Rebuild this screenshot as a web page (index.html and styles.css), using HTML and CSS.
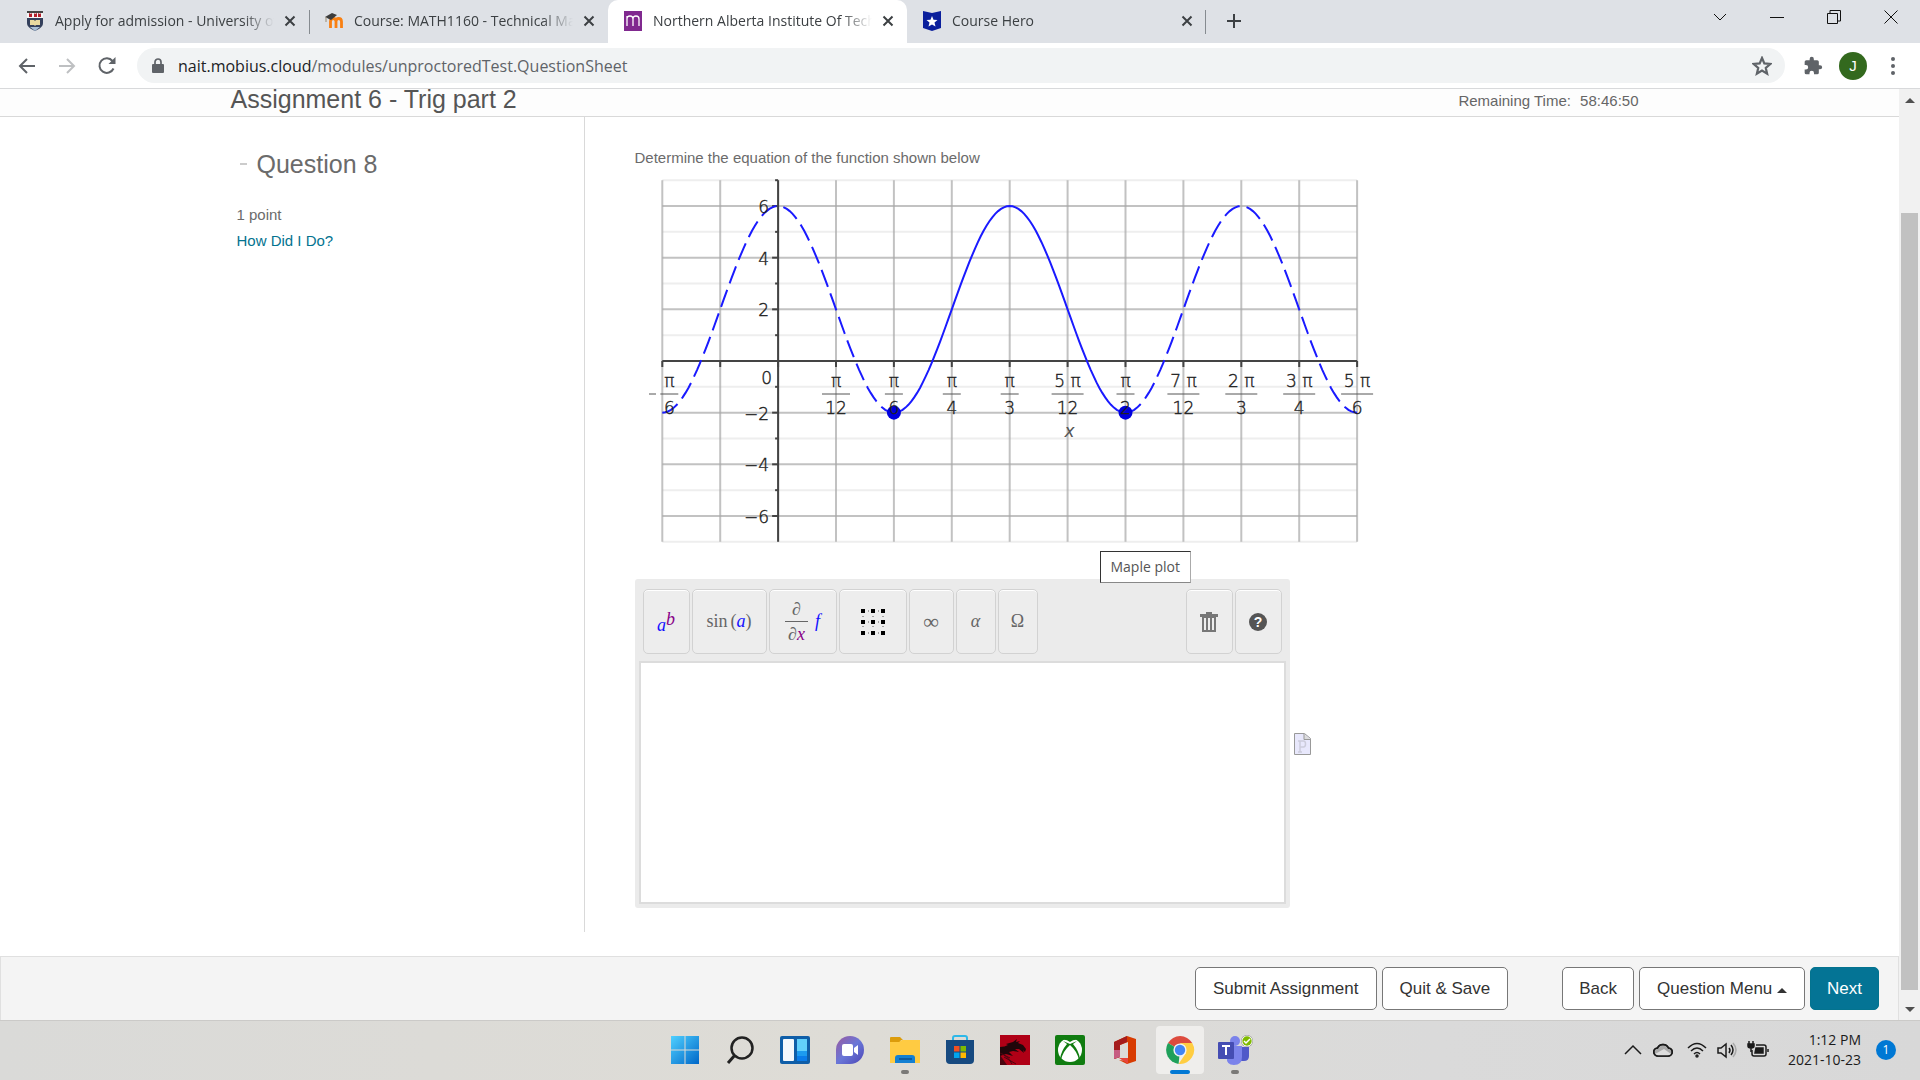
FILE: index.html
```html
<!DOCTYPE html>
<html lang="en">
<head>
<meta charset="UTF-8" />
<meta name="viewport" content="width=device-width, initial-scale=1.0"/>
<title>Northern Alberta Institute Of Technology</title>
<link rel="stylesheet" href="styles.css">
</head>
<body>

<!-- Browser tabs -->
<div class="tab-strip">
  <div class="tab">
    <svg class="favicon" viewBox="0 0 18 20">
      <path d="M1 0h16v12c0 4-4 6-8 8-4-2-8-4-8-8z" fill="#34405c"/>
      <path d="M1 0h16v7H1z" fill="#f5f5f5"/>
      <path d="M1 0h16v2H1z" fill="#444"/>
      <path d="M3 2l2 1 1-1v4H3zM8 2l1 1 2-1v4H8zM12 2l2 1 1-1v4h-3z" fill="#b3202c"/>
      <path d="M4 9h4l1 1 1-1h4v5h-4l-1 1-1-1H4z" fill="#e8d9a0"/>
      <path d="M4 16h10l-5 4z" fill="#a9bfd6"/>
    </svg>
    <span class="tab-title">Apply for admission - University of Victoria</span>
    <button class="tab-close" aria-label="Close tab"><svg viewBox="0 0 12 12"><path d="M1.500 1.500l9 9M10.500 1.500l-9 9"/></svg></button>
  </div>
  <div class="tab divided">
    <svg class="favicon" viewBox="0 0 18 20">
      <path d="M5.500 17V10.500q0-3 2.700-3t2.800 3V17M11 17v-6.500q0-3 2.700-3t2.800 3V17" fill="none" stroke="#f98012" stroke-width="2.800"/>
      <path d="M0 6l7-4 5 2-6 5z" fill="#3c3c3c"/>
      <path d="M1 6v5" stroke="#9a8a70"/>
    </svg>
    <span class="tab-title">Course: MATH1160 - Technical Mathematics</span>
    <button class="tab-close" aria-label="Close tab"><svg viewBox="0 0 12 12"><path d="M1.500 1.500l9 9M10.500 1.500l-9 9"/></svg></button>
  </div>
  <div class="tab active">
    <svg class="favicon" viewBox="0 0 18 20">
      <path d="M0 0h18v20H0z" fill="#80298f"/>
      <path d="M3 15V5M3 8q0-3 3-3t3 3v7M9 8q0-3 3-3t3 3v7" fill="none" stroke="#fff" stroke-width="1.300"/>
    </svg>
    <span class="tab-title">Northern Alberta Institute Of Technology</span>
    <button class="tab-close" aria-label="Close tab"><svg viewBox="0 0 12 12"><path d="M1.500 1.500l9 9M10.500 1.500l-9 9"/></svg></button>
  </div>
  <div class="tab last">
    <svg class="favicon" viewBox="0 0 18 20">
      <path d="M0 0l9 2 9-2v17l-9 3-9-3z" fill="#0a1f9c"/>
      <path d="M9 5l1.500 3.700 4 .3-3 2.600 1 4L9 13.400l-3.500 2.200 1-4-3-2.600 4-.3z" fill="#fff"/>
    </svg>
    <span class="tab-title">Course Hero</span>
    <button class="tab-close" aria-label="Close tab"><svg viewBox="0 0 12 12"><path d="M1.500 1.500l9 9M10.500 1.500l-9 9"/></svg></button>
  </div>
  <button class="new-tab" aria-label="New tab"><svg viewBox="0 0 16 16"><path d="M8 1v14M1 8h14"/></svg></button>
  <div class="window-controls">
    <button aria-label="Search tabs"><svg viewBox="0 0 14 14"><path d="M1 4l6 6 6-6"/></svg></button>
    <button aria-label="Minimize"><svg viewBox="0 0 14 14"><path d="M0 7.500h14"/></svg></button>
    <button aria-label="Restore"><svg viewBox="0 0 14 14"><path d="M.5 3.500h10v10H.5zM3 3V.5h10.500V11H11"/></svg></button>
    <button aria-label="Close"><svg viewBox="0 0 14 14"><path d="M.5.5l13 13M13.500.5l-13 13"/></svg></button>
  </div>
</div>

<!-- Address bar -->
<div class="toolbar">
  <button class="nav" aria-label="Back"><svg viewBox="0 0 20 20"><path d="M18 10H3M10 3l-7 7 7 7"/></svg></button>
  <button class="nav disabled" aria-label="Forward"><svg viewBox="0 0 20 20"><path d="M2 10h15M10 3l7 7-7 7"/></svg></button>
  <button class="nav" aria-label="Reload"><svg viewBox="0 0 20 20"><path d="M16.500 12.500A7.300 7.300 0 1 1 15.500 5"/><path d="M18.500 1v7h-7z" class="solid"/></svg></button>
  <div class="address">
    <svg class="lock" viewBox="0 0 12 16"><path d="M1 6h10q1 0 1 1v7q0 1-1 1H1q-1 0-1-1V7q0-1 1-1z" fill="#5f6368"/><path d="M3 7V4a3 3 0 0 1 6 0v3" fill="none" stroke="#5f6368" stroke-width="1.700"/></svg>
    <div class="url" role="textbox" aria-label="Address" contenteditable="true" spellcheck="false"><span class="host">nait.mobius.cloud</span>/modules/unproctoredTest.QuestionSheet</div>
    <svg class="star" viewBox="0 0 18 18"><path d="M9 1.800l2.100 4.900 5.300.5-4 3.500 1.200 5.200L9 13.100l-4.600 2.800 1.200-5.200-4-3.500 5.300-.5z"/></svg>
  </div>
  <svg class="puzzle" viewBox="0 0 24 24"><path d="M20.500 11H19V7a2 2 0 0 0-2-2h-4V3.500a2.500 2.500 0 0 0-5 0V5H4a2 2 0 0 0-2 2v3.800h1.500a2.700 2.700 0 0 1 0 5.400H2V20a2 2 0 0 0 2 2h3.800v-1.500a2.700 2.700 0 0 1 5.400 0V22H17a2 2 0 0 0 2-2v-4h1.500a2.500 2.500 0 0 0 0-5z" fill="#5f6368"/></svg>
  <button class="profile">J</button>
  <button class="kebab" aria-label="Menu"><svg viewBox="0 0 4 18"><circle cx="2" cy="2" r="2"/><circle cx="2" cy="9" r="2"/><circle cx="2" cy="16" r="2"/></svg></button>
</div>

<div class="viewport">
  <div class="page">
    <header class="page-header">
      <div class="container">
        <h1>Assignment 6 - Trig part 2</h1>
        <div class="timer">Remaining Time: <span>58:46:50</span></div>
      </div>
    </header>

    <main class="container question">
      <aside class="question-info">
        <h2><span class="dash"></span>Question 8</h2>
        <p>1 point</p>
        <a href="#">How Did I Do?</a>
      </aside>

      <section class="question-body">
        <p>Determine the equation of the function shown below</p>
        <div class="plot-wrap">
          <svg class="plot" id="plot" viewBox="0 0 740 404"></svg>
          <div class="tooltip">Maple plot</div>
        </div>

        <div class="answer-row">
          <div class="editor">
            <div class="editor-tools">
              <button class="w-s power"><i class="blue">a</i><i class="purple">b</i></button>
              <button class="w-xl">sin<span class="paren">(</span><i class="blue">a</i>)</button>
              <button class="w-l deriv">
                <span class="frac"><span>∂</span><span>∂<i class="purple">x</i></span></span>
                <i class="blue">f</i>
              </button>
              <button class="w-l" aria-label="Matrix">
                <svg class="matrix" viewBox="0 0 24 26">
                  <path d="M2 2h20M2 13h20M2 24h20M2 2v22M12 2v22M22 2v22" stroke="#555" stroke-dasharray="1 4" stroke-dashoffset="-5"/>
                  <path d="M0 0h4v4H0zM10 0h4v4h-4zM20 0h4v4h-4zM0 11h4v4H0zM10 11h4v4h-4zM20 11h4v4h-4zM0 22h4v4H0zM10 22h4v4h-4zM20 22h4v4h-4z"/>
                </svg>
              </button>
              <button class="w-m symbol">∞</button>
              <button class="w-xs"><i>α</i></button>
              <button class="w-xs">Ω</button>
              <button class="w-s push" aria-label="Clear">
                <svg class="trash" viewBox="0 0 18 20"><path d="M0 2h18v3H0zM6 0h6v2H6zM2 5h14v15H2z" fill="#777"/><path d="M5 6v12M9 6v12M13 6v12" stroke="#eee" stroke-width="2"/></svg>
              </button>
              <button class="w-s" aria-label="Help"><span class="help">?</span></button>
            </div>
            <textarea aria-label="Answer"></textarea>
          </div>
          <a href="#" class="preview" aria-label="Preview">
            <svg viewBox="0 0 17 22">
              <path d="M.5.500h10l6 5v16H.5z" fill="#e8e8fc" stroke="#999"/>
              <path d="M10 1v5.500h6.500" fill="#ddd" stroke="#999"/>
              <path d="M4 19h4M6 19V8M4 8h5.500q2 0 2 3t-2 3H6" fill="none" stroke="#ccccdb" stroke-width="1.500"/>
            </svg>
          </a>
        </div>
      </section>
    </main>

    <footer class="actions">
      <button>Submit Assignment</button>
      <button>Quit &amp; Save</button>
      <button class="back">Back</button>
      <button>Question Menu <span class="caret"></span></button>
      <button class="next">Next</button>
    </footer>
  </div>

  <div class="scrollbar">
    <span class="arrow up"></span>
    <div class="track"><div class="thumb"></div></div>
    <span class="arrow down"></span>
  </div>
</div>

<!-- Windows taskbar -->
<div class="taskbar">
  <div class="apps">
    <button aria-label="Start">
      <svg viewBox="0 0 30 30">
        <defs><linearGradient id="win" x2="1" y2="1"><stop stop-color="#4fd0ff"/><stop offset="1" stop-color="#0067c8"/></linearGradient></defs>
        <path d="M1 1h13.500v13.500H1zM15.500 1H29v13.500H15.500zM1 15.500h13.500V29H1zM15.500 15.500H29V29H15.500z" fill="url(#win)"/>
      </svg>
    </button>
    <button aria-label="Search">
      <svg viewBox="0 0 30 30"><circle cx="17" cy="13" r="10.500" fill="none" stroke="#222" stroke-width="2.500"/><path d="M10 20l-7 8" stroke="#222" stroke-width="3"/></svg>
    </button>
    <button aria-label="Widgets">
      <svg viewBox="0 0 30 30">
        <rect y="1" width="30" height="28" rx="2" fill="#0f5ea8"/>
        <rect x="3" y="4" width="11" height="22" rx="1" fill="#f4f8fc"/>
        <path d="M17 4h10v12H17z" fill="#62d0fb"/><path d="M17 16h10v5H17z" fill="#1c9bf0"/><path d="M17 21h10v5H17z" fill="#0a7cea"/>
      </svg>
    </button>
    <button aria-label="Chat">
      <svg viewBox="0 0 30 30">
        <defs><linearGradient id="chat" x2="1" y2="1"><stop stop-color="#9b5a9e"/><stop offset=".5" stop-color="#6a77d8"/><stop offset="1" stop-color="#4c45b5"/></linearGradient></defs>
        <path d="M1 29V15A14 14 0 1 1 15 29z" fill="url(#chat)"/>
        <rect x="7" y="9" width="11" height="12" rx="2" fill="#fff"/><path d="M19 13l4-3v10l-4-3z" fill="#fff"/>
      </svg>
    </button>
    <button aria-label="File Explorer" class="running">
      <svg viewBox="0 0 30 30">
        <path d="M0 3q0-1 1-1h9l3 3h-2L9 9H0z" fill="#dc9c0b"/>
        <path d="M0 7h9l3-2h18v23H0z" fill="#ffcb42"/>
        <path d="M5 28v-5q0-3 3-3h14q3 0 3 3v5z" fill="#1480d2"/><path d="M9 24h13" stroke="#0b4f91" stroke-width="1.500"/>
      </svg>
    </button>
    <button aria-label="Store">
      <svg viewBox="0 0 30 30">
        <path d="M8 6V3q0-2 2-2h10q2 0 2 2v3" fill="none" stroke="#2eb8e8" stroke-width="2"/>
        <path d="M1 5h28v20q0 4-4 4H5q-4 0-4-4z" fill="#174a80"/>
        <path d="M9 11h5.500v5.500H9z" fill="#f25022"/><path d="M15.500 11H21v5.500h-5.500z" fill="#7fba00"/><path d="M9 17.500h5.500V23H9z" fill="#00a4ef"/><path d="M15.500 17.500H21V23h-5.500z" fill="#ffb900"/>
      </svg>
    </button>
    <button aria-label="Game">
      <svg viewBox="0 0 30 30">
        <path d="M0 0h30v30H0z" fill="#b00016"/>
        <path d="M0 12q5 0 8-2l-2-1 7-2 4-3-1 3 4-1-2 2 5 2 3 4-1 3-2-2 1 3-5-4-4 0 4 3-6-1-4 1 4 4-7-2-6 2z" fill="#20060a"/>
        <path d="M0 20l7 10H0z" fill="#4a0610"/><path d="M0 18q7 2 12 11M4 22l12 7M2 19l8 4" fill="none" stroke="#4a0610"/>
      </svg>
    </button>
    <button aria-label="Xbox">
      <svg viewBox="0 0 30 30">
        <rect width="30" height="30" rx="2" fill="#107c10"/>
        <circle cx="15" cy="15" r="12" fill="#fff"/>
        <path d="M7 5q4-1 8 2 4-3 8-2-4-3-8-3T7 5zM6 25q2-9 9-15 7 6 9 15l1-1q-1-8-7-15l4-3-7 3-7-3 4 3q-6 7-7 15z" fill="#107c10"/>
      </svg>
    </button>
    <button aria-label="Office">
      <svg viewBox="0 0 30 30">
        <path d="M4 7l13-6 9 3v22l-9 3-8-4 9 1V7l-8 3v12l-6 2z" fill="#d83b01"/>
        <path d="M4 7l13-6v6l-7 3v12l-6 2z" fill="#a51c1c"/><path d="M9 23h9v6z" fill="#e6443c"/><path d="M4 15h6v7l-6 2z" fill="#c65c82"/>
      </svg>
    </button>
    <button aria-label="Chrome" class="running current">
      <svg viewBox="0 0 30 30">
        <path d="M15 15L3 8a14 14 0 0 1 24.200 0z" fill="#dd4b3e"/>
        <path d="M15 15L3 8a14 14 0 0 0 10.600 20.900z" fill="#1fa05a"/>
        <path d="M15 8h12.200A14 14 0 0 1 13.600 28.900L21 18z" fill="#ffcd41"/>
        <circle cx="15" cy="15" r="6.600" fill="#f2f2f2"/><circle cx="15" cy="15" r="5.200" fill="#4285f4"/>
      </svg>
    </button>
    <button aria-label="Teams" class="running">
      <svg viewBox="0 0 36 30">
        <circle cx="18" cy="6" r="5" fill="#7b83eb"/><path d="M22 12h10v9q0 5-5 5h-5z" fill="#5059c9"/>
        <path d="M10 11h15v11q0 8-8 8t-7-8z" fill="#7b83eb"/><rect x="1" y="7" width="16" height="17" rx="1" fill="#454db3"/>
        <path d="M5 11h8M9 11v9" stroke="#fff" stroke-width="2"/>
        <circle cx="30" cy="6" r="6" fill="#8a8a8a"/><circle cx="30" cy="6" r="5.500" fill="#fff"/><circle cx="30" cy="6" r="4.700" fill="#7fba00"/>
        <path d="M27 6l2 2 4-4" fill="none" stroke="#fff" stroke-width="1.500"/>
      </svg>
    </button>
  </div>
  <div class="tray">
    <svg viewBox="0 0 20 20"><path d="M2 14l8-8 8 8"/></svg>
    <svg viewBox="0 0 20 20"><path d="M5 16a4 4 0 0 1-.5-8 6 6 0 0 1 11 0A4 4 0 0 1 15 16z" fill="#aaa"/><path d="M2 14l9-5 7 5-3 2H5z" fill="#ddd" stroke="none"/><path d="M5 16a4 4 0 0 1-.5-8 6 6 0 0 1 11 0A4 4 0 0 1 15 16z"/></svg>
    <svg class="wifi" viewBox="0 0 20 20"><path d="M1 8q9-9 18 0M4 11q6-6 12 0M7 14q3-3 6 0"/><circle cx="10" cy="16" r="1"/></svg>
    <svg viewBox="0 0 20 20"><path d="M1 8v5h3l5 4V4L4 8z"/><path d="M12 8q2 2 0 5M14 5q4 5 0 10"/><path d="M16 3q6 7 0 14" stroke="#aaa"/></svg>
    <svg viewBox="0 0 22 20"><path d="M9 5h8q2 0 2 2v7q0 2-2 2H7q-2 0-2-2v-4"/><path d="M9 8h7v5H8z" class="fill"/><path d="M21 9v3"/><path d="M1 4h6v2q0 2-3 2T1 6zM2 1v3M6 1v3M4 8v4" class="fill"/></svg>
    <div class="clock">1:12 PM<br>2021-10-23</div>
    <span class="notifications">1</span>
  </div>
</div>

<script>
const plot = document.getElementById('plot');
const stepX = 57.9;   // one step is pi/12
const stepY = 25.83;
const x = k => 27.3 + stepX * k;
const y = v => 189 - stepY * v;
let out = '';

function line(x1, y1, x2, y2, cls) {
  out += `<line x1="${x1}" y1="${y1}" x2="${x2}" y2="${y2}" class="${cls}"/>`;
}

function text(tx, ty, value, cls) {
  out += `<text x="${tx}" y="${ty}" class="${cls}">${value}</text>`;
}

// y = 2 + 4cos(6x), x axis starts at -pi/6
function curve(from, to, cls) {
  const points = [];
  for (let k = from; k <= to + 0.001; k += 0.05) {
    points.push(x(k).toFixed(1) + ',' + y(2 + 4 * Math.cos((k - 2) * Math.PI / 2)).toFixed(1));
  }
  out += `<polyline points="${points.join(' ')}" class="${cls}"/>`;
}

// Grid
for (let v = -7; v <= 7; v++) {
  line(x(0), y(v), x(12), y(v), v % 2 ? 'minor' : 'major');
}
for (let k = 0; k <= 12; k++) {
  line(x(k), y(7), x(k), y(-7), 'major');
}

// Axes and ticks
line(x(0), y(0), x(12), y(0), 'axis');
line(x(2), y(7), x(2), y(-7), 'axis');
for (let k = 0; k <= 12; k++) {
  line(x(k), y(0), x(k), y(0) + 6, 'axis');
}
for (let v = -6; v <= 7; v++) {
  line(x(2) - (v % 2 ? 3 : 6), y(v), x(2), y(v), 'axis');
}

curve(0, 4, 'curve dashed');
curve(4, 8, 'curve');
curve(8, 12, 'curve dashed');
out += `<circle cx="${x(4)}" cy="${y(-2)}" r="7"/><circle cx="${x(8)}" cy="${y(-2)}" r="7"/>`;

// Labels
['6', '4', '2', '', '−2', '−4', '−6'].forEach((label, i) => {
  if (label) text(x(2) - 9, y(6 - 2 * i) + 7, label, 'end');
});
text(x(2) - 6, 212, 0, 'end');

const labels = [
  [3, 'π', 12], [4, 'π', 6], [5, 'π', 4], [6, 'π', 3], [7, '5 π', 12],
  [8, 'π', 2], [9, '7 π', 12], [10, '2 π', 3], [11, '3 π', 4], [12, '5 π', 6]
];
function fraction(cx, top, bottom) {
  const half = top.length > 1 ? 16 : bottom > 9 ? 14 : 9;
  text(cx, 215, top, 'mid');
  line(cx - half, 222, cx + half, 222, 'bar');
  text(cx, 242, bottom, 'mid');
}
labels.forEach(([k, top, bottom]) => fraction(x(k), top, bottom));
fraction(x(0) + 7, 'π', 6);
line(14, 222, 21, 222, 'bar');
text(x(7) + 2, 265, 'x', 'mid var');

plot.innerHTML = out;
</script>
</body>
</html>
```

FILE: styles.css
```css
* {
  box-sizing: border-box;
}

body {
  margin: 0;
  height: 100vh;
  display: flex;
  flex-direction: column;
  overflow: hidden;
  font-family: "Liberation Sans", Arial, sans-serif;
  font-size: 15px;
  color: #6b6b6b;
  background: #fff;
}

button {
  font: inherit;
  border: 0;
  padding: 0;
  background: none;
  cursor: pointer;
}

h1, h2, p {
  margin: 0;
  font-weight: normal;
}

/* Tabs */
.tab-strip {
  display: flex;
  flex: none;
  height: 43px;
  padding-left: 10px;
  background: #dee1e6;
  font-family: "Open Sans", sans-serif;
  font-size: 14px;
  color: #3c4043;
}

.tab {
  display: flex;
  align-items: center;
  width: 299px;
  padding: 0 11px 2px 16px;
}

.tab.divided,
.tab.last {
  position: relative;
}

.tab.divided::before,
.tab.last::after {
  content: "";
  position: absolute;
  top: 10px;
  left: 0;
  width: 1px;
  height: 24px;
  background: #868b90;
}

.tab.last::after {
  left: auto;
  right: 0;
}

.tab.active {
  background: #fff;
  border-radius: 10px 10px 0 0;
}

.favicon {
  width: 18px;
  height: 20px;
}

.tab-title {
  flex: 1;
  margin: 0 10px 0 11px;
  overflow: hidden;
  white-space: nowrap;
  mask-image: linear-gradient(to right, #000 86%, transparent);
}

.tab-close {
  width: 14px;
  height: 14px;
}

.tab-close svg {
  display: block;
  width: 12px;
  height: 12px;
  margin-top: 1px;
  stroke: #3c4043;
  stroke-width: 2;
}

.new-tab svg {
  display: block;
  width: 16px;
  height: 16px;
  margin: 0 0 2px 20px;
  stroke: #3c4043;
  stroke-width: 2;
}

.window-controls {
  display: flex;
  margin-left: auto;
  padding-right: 1px;
}

.window-controls button {
  width: 57px;
  height: 37px;
}

.window-controls svg {
  width: 14px;
  height: 14px;
  fill: none;
  stroke: #111;
}

/* Address bar */
.toolbar {
  display: flex;
  flex: none;
  align-items: center;
  height: 46px;
  padding: 0 19px 0 17px;
  border-bottom: 1px solid #d8d9db;
}

.nav {
  width: 20px;
  height: 20px;
  margin-right: 20px;
}

.nav svg {
  display: block;
  width: 20px;
  height: 20px;
  fill: none;
  stroke: #5f6368;
  stroke-width: 2;
}

.nav .solid {
  fill: #5f6368;
  stroke: none;
}

.nav.disabled {
  opacity: 0.4;
}

.address {
  flex: 1;
  display: flex;
  align-items: center;
  height: 35px;
  padding: 0 13px 0 15px;
  border-radius: 18px;
  background: #f1f3f4;
  font-family: "Open Sans", sans-serif;
  font-size: 16px;
  color: #5f6368;
}

.lock {
  width: 12px;
  height: 16px;
  margin-right: 14px;
}

.url {
  flex: 1;
}

.host {
  color: #202124;
}

.star {
  width: 20px;
  height: 20px;
  fill: none;
  stroke: #5f6368;
  stroke-width: 2;
}

.puzzle {
  width: 20px;
  height: 20px;
  margin: 0 16px 0 18px;
}

.profile {
  width: 28px;
  height: 28px;
  border-radius: 50%;
  background: #33691e;
  color: #fff;
  font-size: 15px;
}

.kebab {
  width: 4px;
  height: 18px;
  margin: 0 6px 0 24px;
}

.kebab svg {
  display: block;
  width: 4px;
  height: 18px;
  fill: #5f6368;
}

/* Page */
.viewport {
  flex: 1;
  display: flex;
  min-height: 0;
}

.page {
  flex: 1;
  display: flex;
  flex-direction: column;
}

.container {
  width: 100%;
  max-width: 1464px;
  margin: 0 auto;
}

.page-header {
  height: 28px;
  background: #fdfdfd;
  border-bottom: 1px solid #d9d9d9;
}

.page-header .container {
  display: flex;
  justify-content: space-between;
  padding: 0 43px 0 13px;
  line-height: 24px;
}

h1 {
  font-size: 25px;
  color: #555;
  line-height: 20px;
}

.timer {
  color: #666;
}

.timer span {
  margin-left: 5px;
}

.question {
  flex: 1;
  display: flex;
  margin-bottom: 24px;
}

.question-info {
  width: 367px;
  padding: 33px 0 0 19px;
  border-right: 1px solid #d9d9d9;
}

h2 {
  display: flex;
  align-items: center;
  margin-bottom: 27px;
  font-size: 25px;
  line-height: 28px;
}

.dash {
  width: 7px;
  height: 2px;
  margin: 0 10px 0 3px;
  background: #ccc;
}

.question-info p {
  margin-bottom: 7px;
  line-height: 20px;
}

a {
  color: #03738f;
  text-decoration: none;
}

.question-body {
  flex: 1;
  padding: 31px 0 0 50px;
}

.question-body p {
  line-height: 20px;
}

.plot-wrap {
  position: relative;
  margin-top: 4px;
}

.plot {
  display: block;
  width: 740px;
  height: 404px;
  margin-bottom: 3px;
}

.plot line.minor {
  stroke: #eee;
  stroke-width: 2;
}

.plot line.major {
  stroke: #a8a8a8;
  stroke-opacity: 0.7;
  stroke-width: 2;
}

.plot line.axis {
  stroke: #444;
  stroke-width: 2;
}

.plot line.bar {
  stroke: #555;
  stroke-width: 1;
}

.plot .curve {
  fill: none;
  stroke: #1a1aff;
  stroke-width: 2;
}

.plot .dashed {
  stroke-dasharray: 18 7;
}

.plot circle {
  fill: #00d;
}

.plot text {
  font-family: "DejaVu Sans", sans-serif;
  font-weight: 200;
  font-size: 17px;
  fill: #222;
  stroke: #222;
  stroke-width: 0.4;
}

.plot .mid {
  text-anchor: middle;
}

.plot .end {
  text-anchor: end;
}

.plot .var {
  font-style: italic;
  fill: #555;
  stroke: none;
}

.tooltip {
  position: absolute;
  left: 465px;
  top: 379px;
  padding: 0 10px;
  border: 1px solid #333;
  border-right-color: #aaa;
  border-bottom-color: #888;
  background: #fff;
  font-family: "Open Sans", sans-serif;
  font-size: 14px;
  line-height: 30px;
  color: #555;
}

/* Answer editor */
.answer-row {
  display: flex;
  align-items: center;
  gap: 4px;
}

.editor {
  width: 655px;
  padding: 10px 4px 4px;
  border-radius: 3px;
  background: #ebebeb;
}

.editor-tools {
  display: flex;
  gap: 2px;
  padding: 0 4px;
  margin-bottom: 7px;
}

.editor-tools button {
  display: flex;
  align-items: center;
  justify-content: center;
  height: 65px;
  border: 1px solid #d2d2d2;
  border-radius: 5px;
  background: #ededed;
  box-shadow: inset 0 1px #fff;
  font-family: "Liberation Serif", serif;
  font-size: 18px;
  color: #666;
}

.editor-tools .w-xs { width: 40px; }
.editor-tools .w-m { width: 45px; }
.editor-tools .w-s { width: 47px; }
.editor-tools .w-l { width: 68px; }
.editor-tools .w-xl { width: 75px; }

.editor-tools .push {
  margin-left: auto;
}

.editor-tools .symbol {
  font-size: 22px;
}

.editor-tools .blue {
  color: #11f;
}

.editor-tools .purple {
  color: #808;
}

.power .blue {
  padding-top: 8px;
}

.power .purple {
  padding-bottom: 5px;
}

.paren {
  margin-left: 3px;
}

.deriv {
  gap: 7px;
}

.frac {
  display: flex;
  flex-direction: column;
  width: 23px;
  line-height: 24px;
}

.frac span:first-child {
  border-bottom: 1px solid #666;
}

.matrix {
  width: 24px;
  height: 26px;
}

.trash {
  width: 18px;
  height: 20px;
}

.help {
  width: 18px;
  height: 18px;
  border-radius: 50%;
  background: #555;
  color: #fff;
  font: bold 14px/18px "Liberation Sans", sans-serif;
}

.editor textarea {
  display: block;
  width: 100%;
  height: 243px;
  border: 2px solid #dcdcdc;
  background: #fff;
  resize: none;
}

.preview svg {
  display: block;
  width: 17px;
  height: 22px;
}

/* Bottom buttons */
.actions {
  display: flex;
  align-items: center;
  justify-content: flex-end;
  gap: 5px;
  height: 64px;
  padding-right: 19px;
  border: 1px solid #e0e0e0;
  border-bottom: 0;
  background: #f4f4f4;
}

.actions button {
  height: 43px;
  padding: 0 17px;
  border: 1px solid #777;
  border-radius: 5px;
  background: #fff;
  color: #333;
  font-size: 17px;
}

.actions .back {
  margin-left: 49px;
  padding: 0 16px;
}

.actions .next {
  padding: 0 16px;
  border-color: #03738f;
  background: #047495;
  color: #fff;
}

.caret {
  display: inline-block;
  border: 5px solid transparent;
  border-top: 0;
  border-bottom-color: #333;
  vertical-align: 1px;
}

.scrollbar {
  display: flex;
  flex-direction: column;
  align-items: center;
  width: 21px;
  padding: 9px 0 8px;
  background: #f1f1f1;
}

.track {
  flex: 1;
  width: 17px;
  margin: 8px 0 17px;
  padding-top: 102px;
}

.thumb {
  height: 100%;
  background: #c1c1c1;
}

.arrow {
  border: 5px solid transparent;
}

.arrow.up {
  border-top: 0;
  border-bottom-color: #505050;
}

.arrow.down {
  border-bottom: 0;
  border-top-color: #505050;
}

/* Taskbar */
.taskbar {
  display: grid;
  grid-template-columns: 1fr auto 1fr;
  flex: none;
  height: 60px;
  padding-bottom: 1px;
  border-top: 1px solid #cbcac8;
  background: linear-gradient(to right, #dadad8, #dedcd6 45%, #dadada 75%, #d8d8d8);
}

.apps {
  grid-column: 2;
  display: flex;
  align-items: center;
  gap: 7px;
}

.apps button {
  position: relative;
  width: 48px;
  height: 48px;
  border-radius: 4px;
}

.apps svg {
  display: block;
  height: 30px;
  margin: 0 auto;
}

.apps .current {
  background: #efeeec;
}

.running::after {
  content: "";
  position: absolute;
  left: 20px;
  bottom: 0;
  width: 8px;
  height: 4px;
  border-radius: 2px;
  background: #7a7977;
}

.current.running::after {
  left: 14px;
  width: 20px;
  background: #0078d4;
}

.tray {
  display: flex;
  align-items: center;
  justify-content: flex-end;
  padding-right: 24px;
  color: #1b1b1b;
  font-family: "Open Sans", sans-serif;
  font-size: 14px;
}

.tray svg {
  height: 20px;
  margin-right: 10px;
  fill: none;
  stroke: #1b1b1b;
  stroke-width: 1.5;
}

.tray .wifi {
  margin-left: 4px;
}

.tray .fill {
  fill: #1b1b1b;
}

.clock {
  margin-left: 9px;
  text-align: right;
  line-height: 20px;
}

.notifications {
  width: 20px;
  margin-left: 15px;
  border-radius: 50%;
  background: #0078d4;
  color: #fff;
  font-size: 12px;
  line-height: 20px;
  text-align: center;
}
```
